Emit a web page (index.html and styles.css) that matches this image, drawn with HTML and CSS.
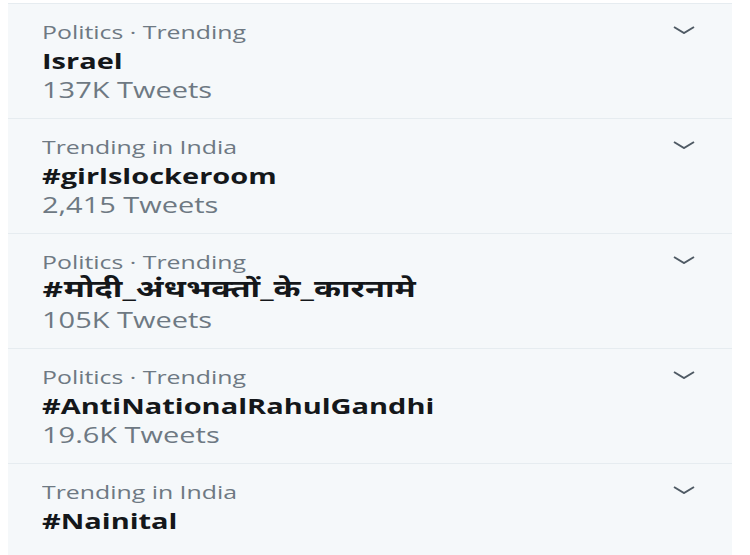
FILE: index.html
```html
<!DOCTYPE html>
<html>
<head>
<meta charset="utf-8">
<link rel="stylesheet" href="styles.css">
</head>
<body>
<div class="panel">
  <div class="trend">
    <div class="info">
      <div class="meta">Politics · Trending</div>
      <div class="name">Israel</div>
      <div class="count">137K Tweets</div>
    </div>
    <svg class="chev" viewBox="0 0 22 8"><path d="M1 1 L11 7 L21 1" /></svg>
  </div>
  <div class="trend">
    <div class="info">
      <div class="meta">Trending in India</div>
      <div class="name">#girlslockeroom</div>
      <div class="count">2,415 Tweets</div>
    </div>
    <svg class="chev" viewBox="0 0 22 8"><path d="M1 1 L11 7 L21 1" /></svg>
  </div>
  <div class="trend">
    <div class="info">
      <div class="meta">Politics · Trending</div>
      <div class="name hi">#मोदी_अंधभक्तों_के_कारनामे</div>
      <div class="count">105K Tweets</div>
    </div>
    <svg class="chev" viewBox="0 0 22 8"><path d="M1 1 L11 7 L21 1" /></svg>
  </div>
  <div class="trend">
    <div class="info">
      <div class="meta">Politics · Trending</div>
      <div class="name">#AntiNationalRahulGandhi</div>
      <div class="count">19.6K Tweets</div>
    </div>
    <svg class="chev" viewBox="0 0 22 8"><path d="M1 1 L11 7 L21 1" /></svg>
  </div>
  <div class="trend">
    <div class="info">
      <div class="meta">Trending in India</div>
      <div class="name">#Nainital</div>
      <div class="count">&nbsp;</div>
    </div>
    <svg class="chev" viewBox="0 0 22 8"><path d="M1 1 L11 7 L21 1" /></svg>
  </div>
</div>
</body>
</html>
```
FILE: styles.css
```css
html, body {
  margin: 0;
  padding: 0;
  background: #ffffff;
}
body {
  padding: 3px 18px 0 8px;
  font-family: "Open Sans", "Noto Sans", "Liberation Sans", sans-serif;
}
.panel {
  background: #f5f8fa;
  border-top: 1px solid #e6ecf0;
  height: 552px;
}
.trend {
  display: flex;
  justify-content: space-between;
  align-items: flex-start;
  padding: 14px 37px 13px 34px;
  border-bottom: 1px solid #e6ecf0;
  height: 87px;
}
.info {
  display: flex;
  flex-direction: column;
  transform: scaleX(1.38);
  transform-origin: left top;
  white-space: nowrap;
}
.meta {
  font-size: 18px;
  line-height: 29px;
  color: #6e7983;
}
.count {
  font-size: 21px;
  line-height: 29px;
  color: #6e7983;
}
.name {
  font-size: 21px;
  line-height: 29px;
  font-weight: 700;
  color: #14171a;
}
.hi {
  font-size: 23.6px;
  font-family: "Noto Sans Devanagari", "Noto Sans", "Lohit Devanagari", sans-serif;
}
.chev {
  width: 22px;
  height: 8px;
  margin-top: 8px;
  fill: none;
  stroke: #4f5a64;
  stroke-width: 2;
}
```
